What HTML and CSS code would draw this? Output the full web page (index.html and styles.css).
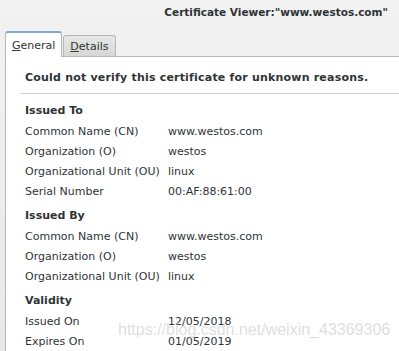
FILE: index.html
```html
<!DOCTYPE html>
<html>
<head>
<meta charset="utf-8">
<link rel="stylesheet" href="styles.css">
</head>
<body>
<div class="window">
  <div class="titlebar"><span class="title">Certificate Viewer:"www.westos.com"</span></div>
  <div class="tabs">
    <div class="tab active"><span class="u">G</span>eneral</div>
    <div class="tab"><span class="u">D</span>etails</div>
  </div>
  <div class="panel">
    <div class="warning">Could not verify this certificate for unknown reasons.</div>
    <div class="sep"></div>
    <div class="section">
      <div class="heading">Issued To</div>
      <div class="grid">
        <div class="k">Common Name (CN)</div><div class="v">www.westos.com</div>
        <div class="k">Organization (O)</div><div class="v">westos</div>
        <div class="k">Organizational Unit (OU)</div><div class="v">linux</div>
        <div class="k">Serial Number</div><div class="v">00:AF:88:61:00</div>
      </div>
    </div>
    <div class="section">
      <div class="heading">Issued By</div>
      <div class="grid">
        <div class="k">Common Name (CN)</div><div class="v">www.westos.com</div>
        <div class="k">Organization (O)</div><div class="v">westos</div>
        <div class="k">Organizational Unit (OU)</div><div class="v">linux</div>
      </div>
    </div>
    <div class="section">
      <div class="heading">Validity</div>
      <div class="grid">
        <div class="k">Issued On</div><div class="v">12/05/2018</div>
        <div class="k">Expires On</div><div class="v">01/05/2019</div>
      </div>
    </div>
    <div class="watermark">https://blog.csdn.net/weixin_43369306</div>
  </div>
</div>
</body>
</html>
```
FILE: styles.css
```css
html, body {
  margin: 0;
  padding: 0;
}
body {
  width: 399px;
  height: 351px;
  overflow: hidden;
  background: #ededed;
  font-family: "DejaVu Sans", sans-serif;
  font-size: 11px;
  color: #2e3436;
}
.window {
  display: flex;
  flex-direction: column;
  height: 351px;
  overflow: hidden;
  background: linear-gradient(#f2f2f2, #e8e8e8);
}
.titlebar {
  flex-shrink: 0;
  height: 24px;
  display: flex;
  align-items: center;
  justify-content: flex-end;
  padding-right: 11px;
}
.title {
  font-weight: bold;
  color: #2e3436;
  font-size: 10.5px;
}
.tabs {
  flex-shrink: 0;
  display: flex;
  align-items: flex-end;
  padding-left: 5px;
  height: 32px;
}
.tab {
  box-sizing: border-box;
  height: 21px;
  padding: 0 6px;
  display: flex;
  align-items: center;
  border: 1px solid #b6b6b3;
  border-bottom: none;
  border-radius: 3px 3px 0 0;
  background: linear-gradient(#e8e8e7, #d6d6d4);
  color: #2e3436;
  margin-right: 1px;
}
.tab.active {
  height: 26px;
  background: #ffffff;
  border-color: #b6b6b3;
  border-top: 2px solid #7ea7d8;
  margin-bottom: -1px;
  position: relative;
  z-index: 1;
}
.u {
  text-decoration: underline;
}
.panel {
  flex: 1 1 auto;
  min-height: 0;
  position: relative;
  margin-left: 5px;
  background: #ffffff;
  border-top: 1px solid #b6b6b3;
  border-left: 1px solid #b6b6b3;
  padding: 0 0 0 14px;
}
.warning {
  font-weight: bold;
  letter-spacing: 0.2px;
  padding: 14px 0 0 5px;
  height: 22px;
}
.sep {
  height: 1px;
  background: #cfcfcd;
  margin-bottom: 7px;
}
.section {
  padding-left: 5px;
  margin-bottom: 5px;
}
.heading {
  font-weight: bold;
  height: 20px;
  line-height: 20px;
}
.grid {
  display: grid;
  grid-template-columns: 143px auto;
  grid-auto-rows: 20px;
  align-items: center;
}
.watermark {
  position: absolute;
  left: 112px;
  top: 264px;
  font-family: "Liberation Sans", sans-serif;
  font-size: 16px;
  color: rgba(200, 200, 200, 0.6);
  pointer-events: none;
}
```
